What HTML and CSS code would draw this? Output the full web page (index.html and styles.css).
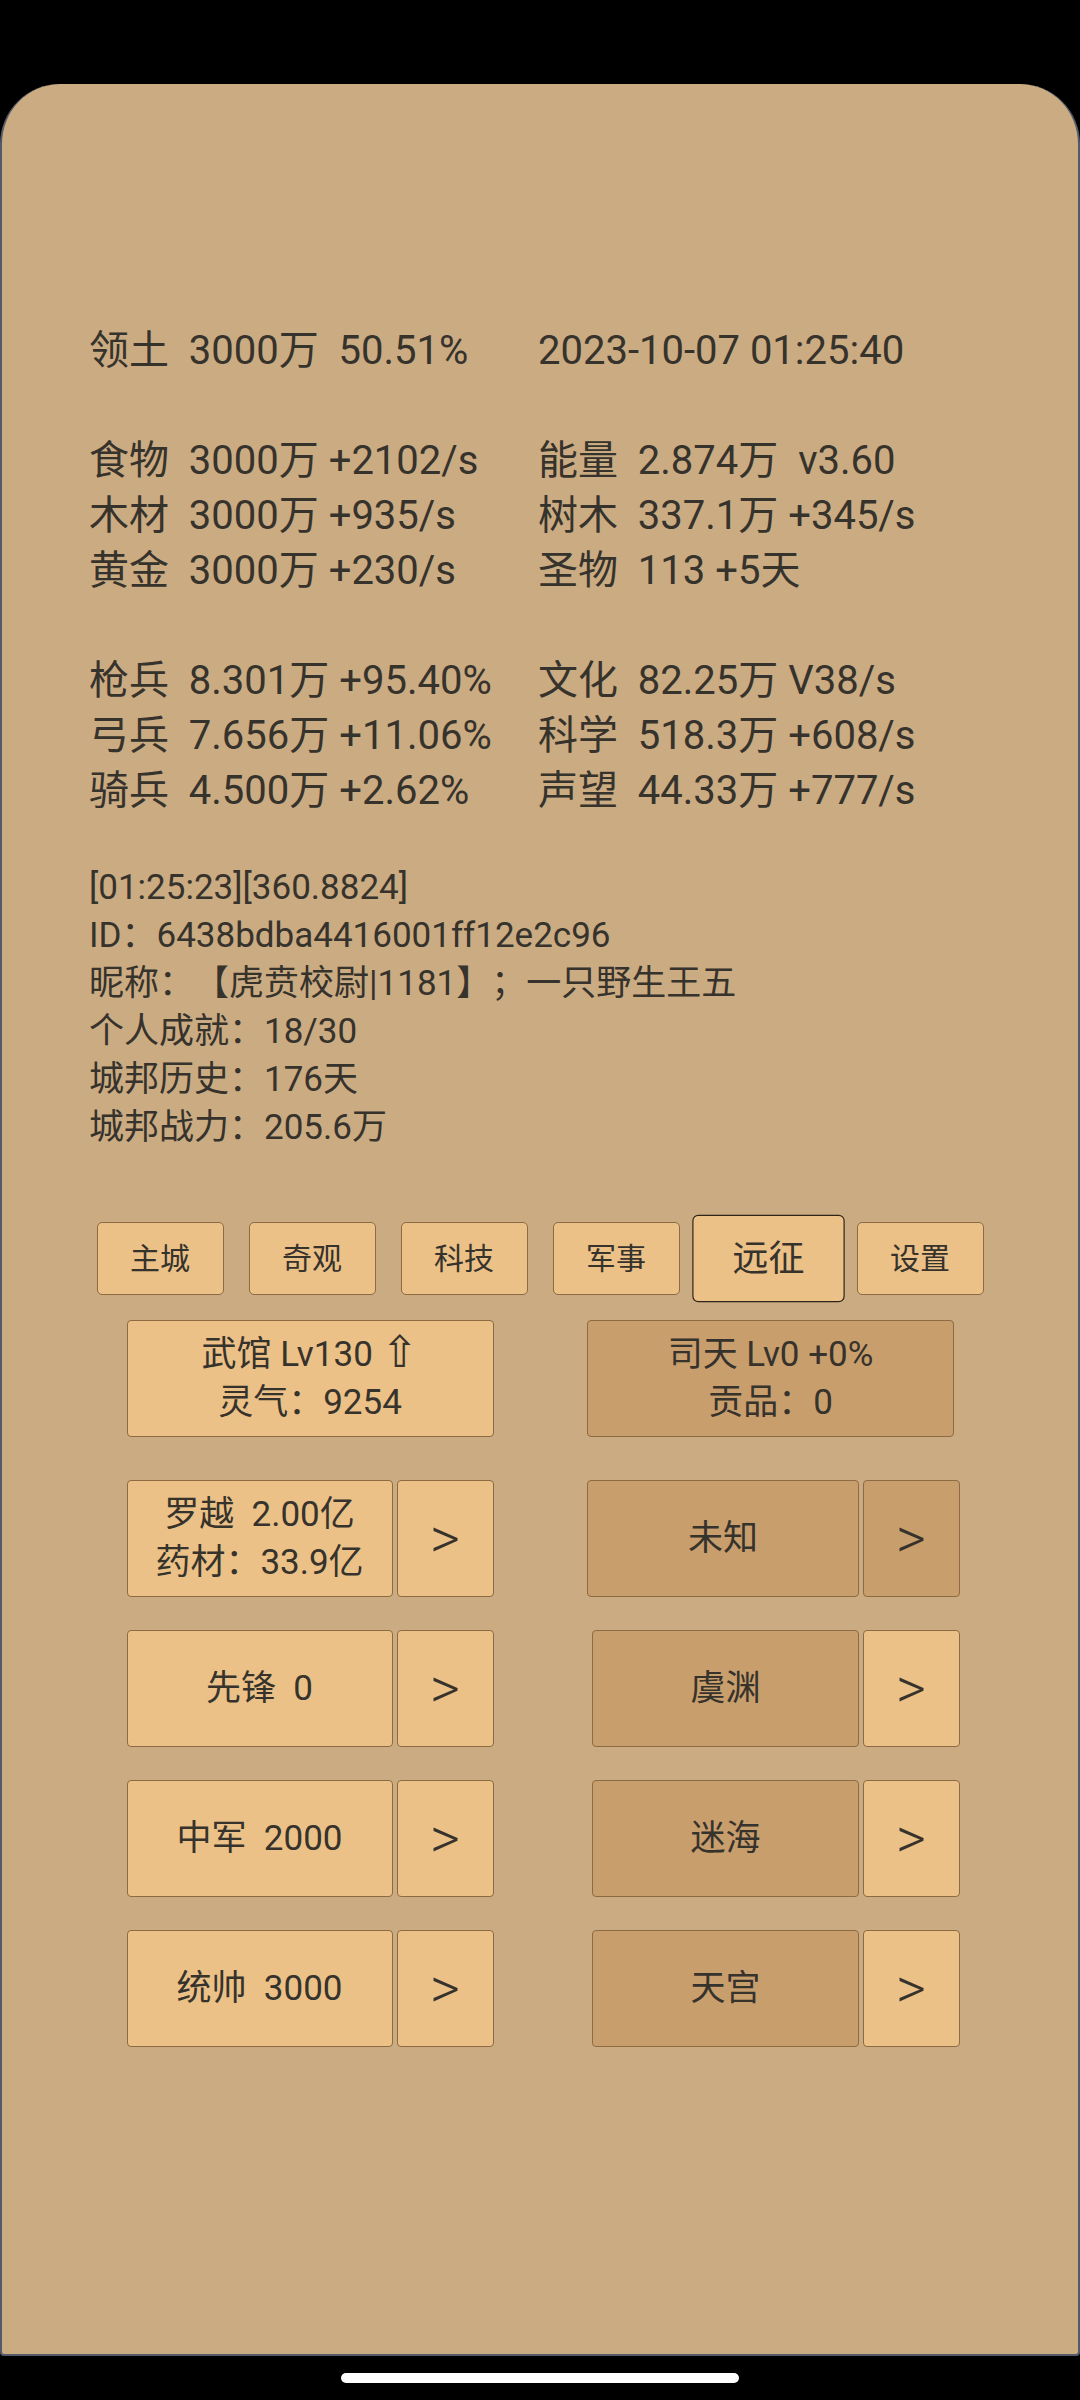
FILE: index.html
```html
<!DOCTYPE html>
<html lang="zh-CN">
<head>
<meta charset="utf-8">
<title>城邦</title>
<link rel="stylesheet" href="styles.css">
</head>
<body>
<div class="screen">
  <div class="statusbar"></div>
  <main class="card">
    <section class="stats">
      <div>领土  3000万  50.51%</div><div>2023-10-07 01:25:40</div>
      <div class="blank"></div>
      <div>食物  3000万 +2102/s</div><div>能量  2.874万  v3.60</div>
      <div>木材  3000万 +935/s</div><div>树木  337.1万 +345/s</div>
      <div>黄金  3000万 +230/s</div><div>圣物  113 +5天</div>
      <div class="blank"></div>
      <div>枪兵  8.301万 +95.40%</div><div>文化  82.25万 V38/s</div>
      <div>弓兵  7.656万 +11.06%</div><div>科学  518.3万 +608/s</div>
      <div>骑兵  4.500万 +2.62%</div><div>声望  44.33万 +777/s</div>
    </section>

    <section class="info">
      <div>[01:25:23][360.8824]</div>
      <div>ID：6438bdba4416001ff12e2c96</div>
      <div>昵称：【虎贲校尉|1181】；一只野生王五</div>
      <div>个人成就：18/30</div>
      <div>城邦历史：176天</div>
      <div>城邦战力：205.6万</div>
    </section>

    <nav class="tabs">
      <div class="tab">主城</div>
      <div class="tab">奇观</div>
      <div class="tab">科技</div>
      <div class="tab">军事</div>
      <div class="tab selected">远征</div>
      <div class="tab">设置</div>
    </nav>

    <section class="bld-row">
      <div class="cell light bld">
        <div>武馆 Lv130 <span class="up">⇧</span></div>
        <div>灵气：9254</div>
      </div>
      <div class="cell dark bld">
        <div>司天 Lv0 +0%</div>
        <div>贡品：0</div>
      </div>
    </section>

    <section class="grid">
      <div class="row">
        <div class="pair">
          <div class="cell light name"><div>罗越  2.00亿</div><div>药材：33.9亿</div></div>
          <div class="cell light arrow">&gt;</div>
        </div>
        <div class="pair right">
          <div class="cell dark name wide">未知</div>
          <div class="cell dark arrow">&gt;</div>
        </div>
      </div>
      <div class="row">
        <div class="pair">
          <div class="cell light name">先锋  0</div>
          <div class="cell light arrow">&gt;</div>
        </div>
        <div class="pair right">
          <div class="cell dark name">虞渊</div>
          <div class="cell light arrow">&gt;</div>
        </div>
      </div>
      <div class="row">
        <div class="pair">
          <div class="cell light name">中军  2000</div>
          <div class="cell light arrow">&gt;</div>
        </div>
        <div class="pair right">
          <div class="cell dark name">迷海</div>
          <div class="cell light arrow">&gt;</div>
        </div>
      </div>
      <div class="row">
        <div class="pair">
          <div class="cell light name">统帅  3000</div>
          <div class="cell light arrow">&gt;</div>
        </div>
        <div class="pair right">
          <div class="cell dark name">天宫</div>
          <div class="cell light arrow">&gt;</div>
        </div>
      </div>
    </section>
  </main>
  <div class="navbar"><div class="pill"></div></div>
</div>
</body>
</html>
```

FILE: styles.css
```css
html, body {
  margin: 0;
  padding: 0;
  background: #000;
}

.screen {
  width: 1080px;
  height: 2400px;
  display: flex;
  flex-direction: column;
  background: #000;
  font-family: Roboto, "Noto Sans CJK SC", "DejaVu Sans", sans-serif;
  color: #36322c;
  text-spacing-trim: space-all;
}

.statusbar {
  height: 84px;
  flex: none;
}

.card {
  box-sizing: border-box;
  height: 2272px;
  flex: none;
  background: #cbab82;
  border: 2px solid #535a69;
  border-top: none;
  border-radius: 60px 60px 4px 4px;
  overflow: hidden;
}

.stats {
  margin-top: 239px;
  padding-left: 87px;
  display: grid;
  grid-template-columns: 449px auto;
  font-size: 40px;
  line-height: 55px;
}

.stats > div {
  white-space: pre;
}

.stats .blank {
  grid-column: 1 / -1;
  height: 55px;
}

.info {
  margin-top: 46px;
  padding-left: 87px;
  font-size: 35px;
  line-height: 48px;
}

.info > div {
  white-space: pre;
}

.tabs {
  margin-top: 70px;
  display: flex;
  justify-content: center;
  gap: 25px;
}

.tab {
  box-sizing: border-box;
  width: 127px;
  height: 73px;
  display: flex;
  align-items: center;
  justify-content: center;
  font-size: 30px;
  line-height: 36px;
  background: #ebc187;
  border: 1.5px solid #8c6b44;
  border-radius: 5px;
}

.tab.selected {
  transform: scale(1.2);
  border-color: #2e2519;
}

.cell {
  box-sizing: border-box;
  display: flex;
  flex-direction: column;
  align-items: center;
  justify-content: center;
  font-size: 35px;
  line-height: 48px;
  white-space: pre;
  border: 1.5px solid #8c6b44;
  border-radius: 4px;
}

.light {
  background: #ebc187;
}

.dark {
  background: #c99e6d;
}

.bld-row {
  margin-top: 25px;
  margin-left: 124.5px;
  display: flex;
  gap: 93.5px;
}

.bld {
  width: 367px;
  height: 117px;
}

.up {
  font-family: "DejaVu Sans", sans-serif;
  font-size: 44px;
  line-height: 0;
  vertical-align: -1px;
}

.grid {
  margin-top: 43px;
  display: flex;
  flex-direction: column;
  gap: 33px;
}

.row {
  margin-left: 124.5px;
  width: 833px;
  display: flex;
}

.pair {
  display: flex;
  gap: 4px;
}

.pair.right {
  margin-left: auto;
  gap: 3.5px;
}

.name {
  width: 266px;
  height: 117px;
}

.pair.right .name {
  width: 267px;
}

.pair.right .name.wide {
  width: 272px;
}

.arrow {
  width: 97px;
  height: 117px;
  font-size: 58px;
  font-weight: 300;
  line-height: 117px;
}

.navbar {
  flex: 1;
  display: flex;
  justify-content: center;
}

.pill {
  margin-top: 17px;
  width: 398px;
  height: 10px;
  border-radius: 5px;
  background: #fff;
}
```
